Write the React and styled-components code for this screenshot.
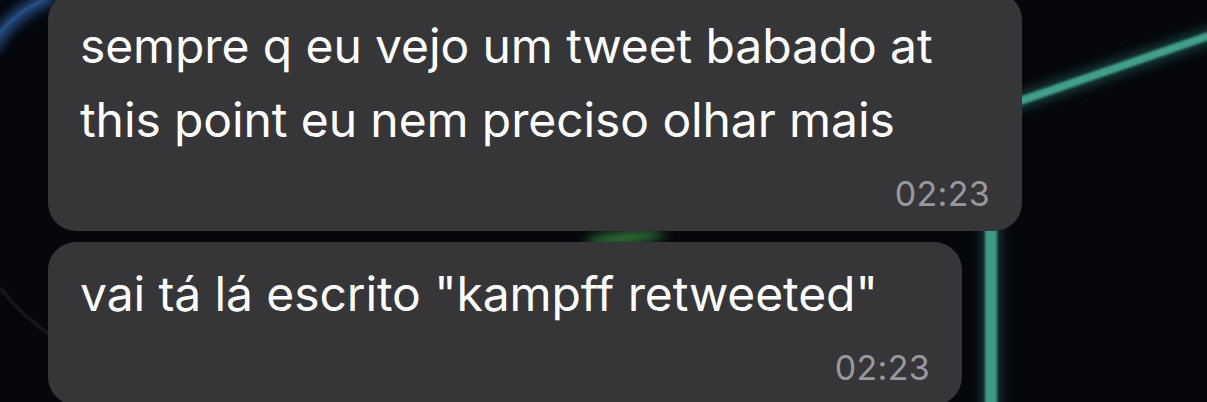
import styled, { createGlobalStyle } from "styled-components";

const GlobalStyle = createGlobalStyle`
  html, body {
    margin: 0;
    padding: 0;
    background: #05070c;
    overflow: hidden;
  }
  * { box-sizing: border-box; }
`;

const Screen = styled.div`
  position: relative;
  width: 1207px;
  height: 402px;
  overflow: hidden;
  background: #05070c;
  font-family: Inter, "Noto Sans", sans-serif;
`;

const Wallpaper = styled.svg`
  position: absolute;
  inset: 0;
  width: 100%;
  height: 100%;
`;

const Thread = styled.div`
  position: relative;
  display: flex;
  flex-direction: column;
  align-items: flex-start;
  gap: 11px;
  padding-left: 48px;
  margin-top: -8px;
`;

const Bubble = styled.div`
  width: ${(p) => p.$width}px;
  background: #363638;
  border-radius: 28px;
  padding: ${(p) => p.$top}px 32px 17px 32px;
  display: flex;
  flex-direction: column;
`;

const Text = styled.div`
  color: #ffffff;
  font-size: 48px;
  line-height: 74px;
  letter-spacing: -0.1px;
`;

const Time = styled.div`
  align-self: flex-end;
  margin-top: 17px;
  color: #98989e;
  font-size: 34px;
  line-height: 40px;
  letter-spacing: 0.3px;
`;

const messages = [
  {
    text: ["sempre q eu vejo um tweet babado at", "this point eu nem preciso olhar mais"],
    time: "02:23",
    width: 974,
    top: 17,
  },
  {
    text: ['vai tá lá escrito "kampff retweeted"'],
    time: "02:23",
    width: 914,
    top: 15,
  },
];

function Background() {
  return (
    <Wallpaper viewBox="0 0 1207 402" preserveAspectRatio="none">
      <defs>
        <filter id="soft" filterUnits="userSpaceOnUse" x="-50" y="-50" width="1307" height="502">
          <feGaussianBlur stdDeviation="1.2" />
        </filter>
        <filter id="glow" filterUnits="userSpaceOnUse" x="-50" y="-50" width="1307" height="502">
          <feGaussianBlur stdDeviation="6" />
        </filter>
      </defs>
      {/* blue arc in the top-left corner */}
      <path d="M-10 50 Q 10 12 54 -4" stroke="#2b5d9c" strokeWidth="12" fill="none" filter="url(#glow)" opacity="0.9" />
      <path d="M-6 40 Q 14 12 48 -2" stroke="#3a78bf" strokeWidth="2" fill="none" filter="url(#soft)" opacity="0.5" />
      {/* faint curve lower left */}
      <path d="M0 288 Q 24 318 52 336" stroke="#12161f" strokeWidth="4" fill="none" filter="url(#soft)" />
      {/* teal diagonal */}
      <path d="M1000 108 L1220 32" stroke="#1d4a44" strokeWidth="14" fill="none" filter="url(#glow)" />
      <path d="M1000 108 L1220 32" stroke="#40a08c" strokeWidth="8" fill="none" filter="url(#soft)" />
      {/* teal vertical */}
      <rect x="982" y="220" width="18" height="200" fill="#1b403c" filter="url(#glow)" />
      <rect x="985" y="220" width="12" height="200" fill="#3f9988" filter="url(#soft)" />
      {/* green flare between bubbles */}
      <ellipse cx="625" cy="238" rx="40" ry="5" fill="#3f9a48" filter="url(#glow)" transform="rotate(-6 625 238)" />
    </Wallpaper>
  );
}

export default function App() {
  return (
    <>
      <GlobalStyle />
      <Screen>
        <Background />
        <Thread>
          {messages.map((m, i) => (
            <Bubble key={i} $width={m.width} $top={m.top}>
              <Text>
                {m.text.map((line) => (
                  <div key={line}>{line}</div>
                ))}
              </Text>
              <Time>{m.time}</Time>
            </Bubble>
          ))}
        </Thread>
      </Screen>
    </>
  );
}
